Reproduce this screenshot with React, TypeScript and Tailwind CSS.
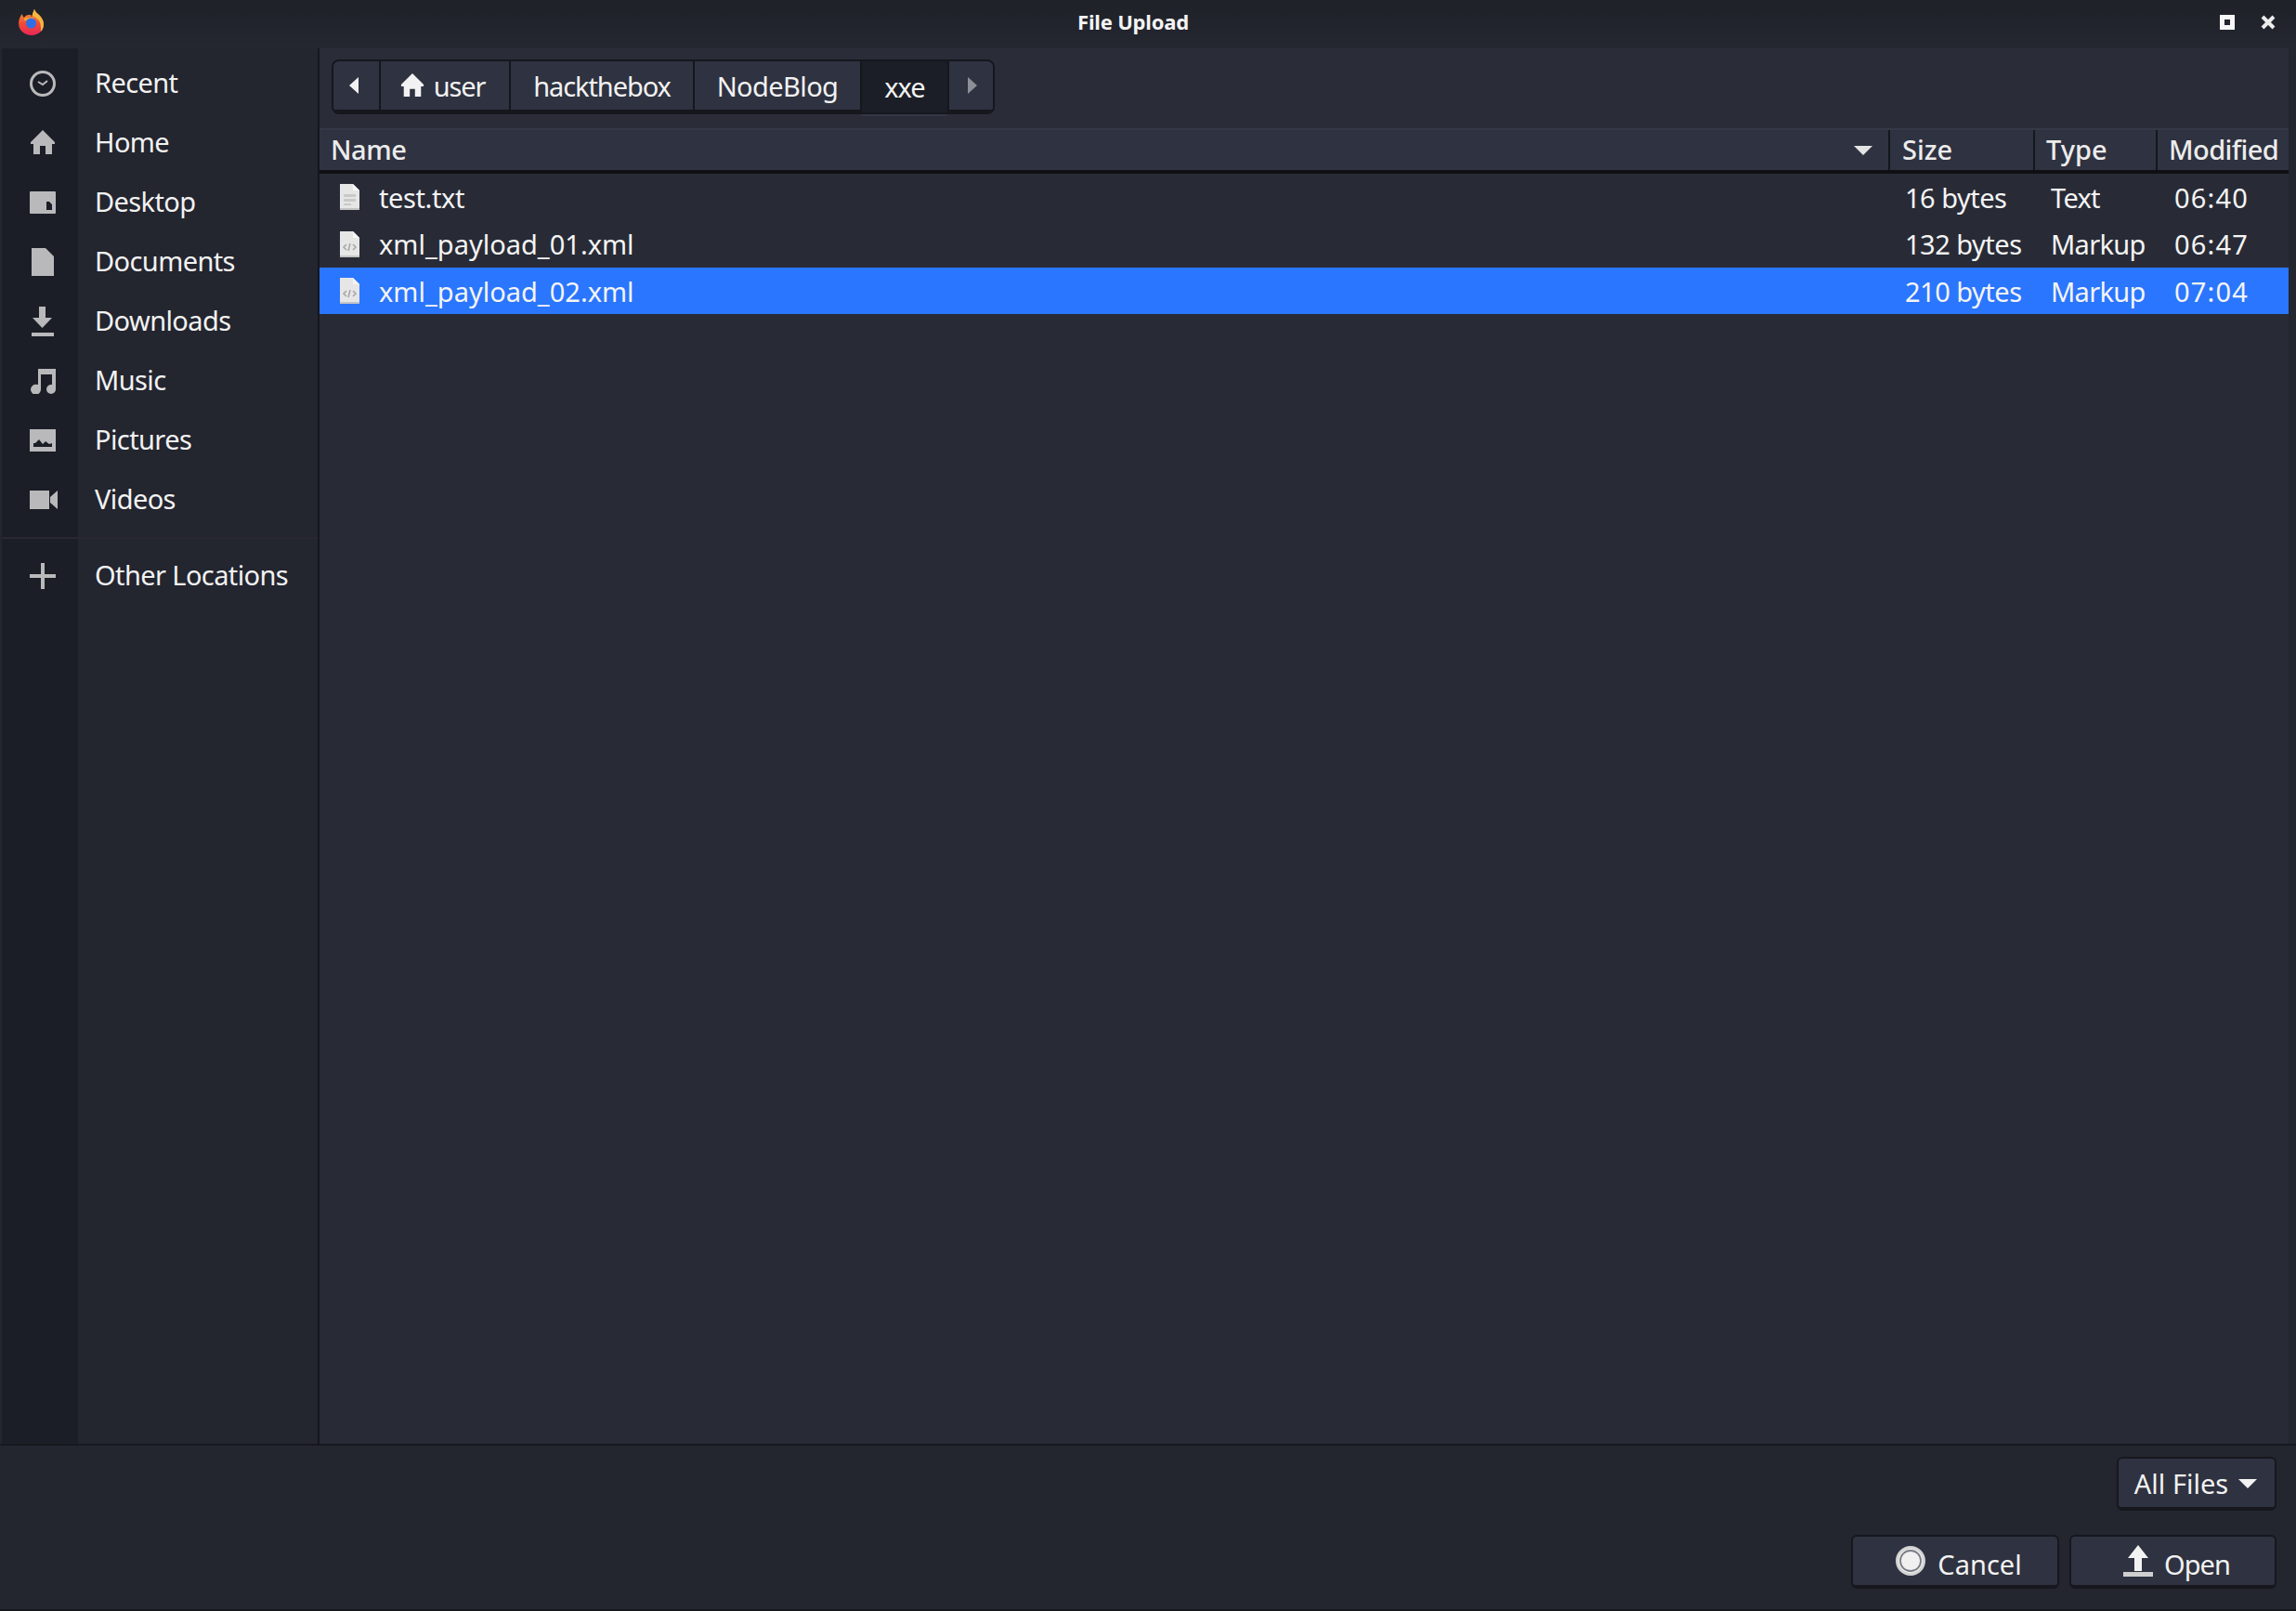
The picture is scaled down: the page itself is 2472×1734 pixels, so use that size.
const font = "font-['Noto_Sans',sans-serif]";

function Firefox() {
  return (
    <svg viewBox="0 0 28 28" className="w-[28px] h-[28px]">
      <defs>
        <linearGradient id="fx" x1="0.5" y1="0" x2="0.5" y2="1">
          <stop offset="0" stopColor="#f7a63a" />
          <stop offset="0.55" stopColor="#ef4b36" />
          <stop offset="1" stopColor="#e8265a" />
        </linearGradient>
      </defs>
      <path d="M17 0c1 3 3 4 5 6 3 3 5 6 5 10 0 7-6 12-13 12S0 23 0 15C0 11 2 7 4 5c0 2 1 3 2 4 1-2 3-3 5-3 1 0 3 0 3 1-1 0-1 1 0 1 1-3 2-5 3-8z" fill="url(#fx)" />
      <path d="M17 0c1 3 3 4 5 6 3 3 5 6 5 10 0 3-1 6-3 8 0-5 0-10-3-13-2-2-4-3-6-4 0-3 1-5 2-7z" fill="#f4b73e" />
      <path d="M6 9h10v3H6z" fill="#f5a12f" />
      <circle cx="13.5" cy="15" r="5.5" fill="#2e6ee6" />
    </svg>
  );
}

const G = "#b9b9bb";

const icons: Record<string, React.ReactNode> = {
  Recent: (
    <svg viewBox="0 0 28 28" className="w-[28px] h-[28px]">
      <circle cx="14" cy="14" r="12.5" fill="none" stroke={G} strokeWidth="3" />
      <path d="M9 12l5 3 5-4" fill="none" stroke={G} strokeWidth="2" />
    </svg>
  ),
  Home: (
    <svg viewBox="0 0 28 28" className="w-[28px] h-[28px]">
      <path d="M14 0L27 13v2h-3v11h-7v-9h-6v9H4V15H1v-2z" fill={G} />
    </svg>
  ),
  Desktop: (
    <svg viewBox="0 0 28 24" className="w-[28px] h-[24px]">
      <path fillRule="evenodd" d="M1 0h26a1 1 0 0 1 1 1v22a1 1 0 0 1-1 1H1a1 1 0 0 1-1-1V1a1 1 0 0 1 1-1z M18 11v9h6v-6l-3-3z" fill={G} />
    </svg>
  ),
  Documents: (
    <svg viewBox="0 0 28 30" className="w-[28px] h-[30px]">
      <path d="M2 0h15l9 9v21H2z" fill={G} />
    </svg>
  ),
  Downloads: (
    <svg viewBox="0 0 28 32" className="w-[28px] h-[32px]">
      <path d="M10 0h7v12h7L13.500 23 3 12h7z M2 28h24v4H2z" fill={G} />
    </svg>
  ),
  Music: (
    <svg viewBox="0 0 28 28" className="w-[28px] h-[28px]">
      <path d="M9 1h19v22a5 5 0 1 1-5-5l1 0V7H12v16a5.500 5.500 0 1 1-5-5.200l2 .2z" fill={G} />
    </svg>
  ),
  Pictures: (
    <svg viewBox="0 0 28 24" className="w-[28px] h-[24px]">
      <path fillRule="evenodd" d="M0 0h28v24H0z M4 19h20v-4l-3 1-4-3-3 3-4-5-4 4-2 0z" fill={G} />
    </svg>
  ),
  Videos: (
    <svg viewBox="0 0 30 20" className="w-[30px] h-[20px]">
      <path d="M0 0h21v20H0z M22 7l8-7v20l-8-7z" fill={G} />
    </svg>
  ),
  "Other Locations": (
    <svg viewBox="0 0 28 28" className="w-[28px] h-[28px]">
      <path d="M12 0h4v12h12v4H16v12h-4V16H0v-4h12z" fill={G} />
    </svg>
  ),
};

function Row({ name }: { name: string }) {
  return (
    <div className="flex h-[64px] items-center">
      <div className="w-[82px] h-full flex items-center pl-[30px] bg-[#1b1e26]">{icons[name]}</div>
      <span className="ml-[18px] mb-[3px] text-[29px] leading-none tracking-[-0.6px] text-[#f2f2f2]">{name}</span>
    </div>
  );
}

function FileIcon({ kind, selected }: { kind: "txt" | "xml"; selected?: boolean }) {
  return (
    <svg viewBox="0 0 22 28" className="w-[22px] h-[28px] shrink-0">
      <path d="M1 0h14l7 7v21H1z" fill="#e6e6e6" />
      <path d="M15 0l7 7h-7z" fill={selected ? "#f4f4f4" : "#f8f8f8"} />
      <path d="M1 26h21v2H1z" fill="#c4c4c4" />
      {kind === "txt" ? (
        <path d="M5 11h13v3H5zM5 16h13v3H5zM5 21h8v2H5z" fill="#c9c9c9" />
      ) : (
        <path d="M8 14l-3 3 3 3M15 14l3 3-3 3M12 13l-2 8" fill="none" stroke="#a8a8a8" strokeWidth="1.600" />
      )}
    </svg>
  );
}

function FileRow({ name, size, type, time, kind, selected, h }: { name: string; size: string; type: string; time: string; kind: "txt" | "xml"; selected?: boolean; h: string }) {
  return (
    <div className={`flex items-center text-[29px] leading-none text-[#f4f4f4] ${h} ${selected ? "bg-[#2a76fe]" : ""}`}>
      <div className="w-[1691px] pl-[21px] flex items-center gap-[21px]">
        <FileIcon kind={kind} selected={selected} />
        <span className={name === "test.txt" ? "tracking-[-0.4px]" : ""}>{name}</span>
      </div>
      <div className="w-[156px] pl-[16px] tracking-[-0.5px]">{size}</div>
      <div className="w-[132px] pl-[17px] tracking-[-0.7px]">{type}</div>
      <div className="pl-[18px] tracking-[1.2px]">{time}</div>
    </div>
  );
}

function Crumb({ children, w, active, last }: { children: React.ReactNode; w: string; active?: boolean; last?: boolean }) {
  return (
    <div className={`flex items-center justify-center h-full text-[29px] leading-none ${w} ${active ? "bg-[#1b1e26]" : "bg-[#2f3240] border-b-[3px] border-[#15171d]"} ${last ? "" : "border-r-[2px] border-r-[#15171d]"}`}>
      {children}
    </div>
  );
}

function Btn({ children, w }: { children: React.ReactNode; w: string }) {
  return (
    <div className={`h-[58px] ${w} rounded-[6px] border-[2px] border-[#16181e] border-b-[4px] bg-[#2f3240] flex items-center justify-center text-[29px] leading-none text-[#f2f2f2]`}>
      {children}
    </div>
  );
}

export default function App() {
  return (
    <div className={`w-[2472px] h-[1734px] flex flex-col bg-[#23252f] overflow-hidden text-[#f2f2f2] ${font}`}>
      <header className="h-[52px] shrink-0 relative flex items-center justify-center bg-gradient-to-b from-[#1f2128] to-[#252731]">
        <div className="absolute left-[20px] top-[10px]"><Firefox /></div>
        <span className="text-[22px] font-bold tracking-[-0.2px] leading-none text-[#f4f4f4] ml-[-32px] mt-[-6px]">File Upload</span>
        <div className="absolute left-[2390px] top-[16px] w-[16px] h-[16px] border-[5px] border-[#f7f7f7]" />
        <svg viewBox="0 0 16 16" className="absolute left-[2434px] top-[16px] w-[16px] h-[16px]">
          <path d="M2 2l12 12M14 2L2 14" stroke="#ececec" strokeWidth="4" />
        </svg>
      </header>

      <div className="h-[1504px] shrink-0 flex pl-[2px] border-b-[2px] border-[#16181e]">
        <aside className="w-[342px] shrink-0 flex flex-col border-r-[2px] border-[#15171d] bg-[#23252f]">
          <div className="h-[6px] flex"><div className="w-[82px] bg-[#1b1e26]" /></div>
          {["Recent", "Home", "Desktop", "Documents", "Downloads", "Music", "Pictures", "Videos"].map((n) => (
            <Row key={n} name={n} />
          ))}
          <div className="h-[8px] flex"><div className="w-[82px] bg-[#1b1e26]" /></div>
          <div className="h-[2px] bg-[#2a2730]" />
          <div className="h-[8px] flex"><div className="w-[82px] bg-[#1b1e26]" /></div>
          <Row name="Other Locations" />
          <div className="flex-1 flex"><div className="w-[82px] bg-[#1b1e26]" /></div>
        </aside>

        <main className="w-[2120px] shrink-0 flex flex-col bg-[#282b36]">
          <div className="h-[86px] shrink-0 pl-[13px] pt-[12px] bg-[#2a2d38]">
            <div className="relative w-[714px]">
              <div className="w-[714px] h-[59px] rounded-[8px] border-[2px] border-[#15171d] overflow-hidden flex">
                <Crumb w="w-[51px]">
                  <svg viewBox="0 0 10 18" className="w-[10px] h-[18px] mr-[5px]"><path d="M10 0v18L0 9z" fill="#f2f2f2" /></svg>
                </Crumb>
                <Crumb w="w-[140px]">
                  <span className="flex items-center gap-[10px] tracking-[-1.2px] mr-[5px]">
                    <svg viewBox="0 0 28 28" className="w-[26px] h-[26px]"><path d="M14 0L27 13v2h-3v12h-7v-9h-6v9H4V15H1v-2z" fill="#f2f2f2" /></svg>
                    user
                  </span>
                </Crumb>
                <Crumb w="w-[198px]"><span className="tracking-[-1.1px]">hackthebox</span></Crumb>
                <Crumb w="w-[180px]"><span className="tracking-[-0.6px]">NodeBlog</span></Crumb>
                <Crumb w="w-[94px]" active><span className="tracking-[-1px] mb-[1px]">xxe</span></Crumb>
                <Crumb w="w-[47px]" last>
                  <svg viewBox="0 0 10 18" className="w-[10px] h-[18px] ml-[2px]"><path d="M0 0v18L10 9z" fill="#8d8f96" /></svg>
                </Crumb>
              </div>
              <div className="absolute left-[570px] top-[59px] w-[93px] h-[2px] bg-[#343744]" />
            </div>
          </div>

          <div className="h-[49px] shrink-0 flex bg-[#2f3240] border-t-[2px] border-[#353846] border-b-[4px] border-b-[#0f1014] text-[29px] font-medium leading-none text-[#ececec]">
            <div className="w-[1691px] pl-[12px] pb-[3px] flex items-center justify-between pr-[17px] border-r-[2px] border-[#15171d]">
              <span className="tracking-[-0.4px]">Name</span>
              <svg viewBox="0 0 20 10" className="w-[20px] h-[10px] mt-[3px]"><path d="M0 0h20L10 10z" fill="#e4e4e4" /></svg>
            </div>
            <div className="w-[156px] pl-[13px] pb-[3px] flex items-center border-r-[2px] border-[#15171d]">Size</div>
            <div className="w-[132px] pl-[12px] pb-[3px] flex items-center border-r-[2px] border-[#15171d]">Type</div>
            <div className="flex-1 pl-[12px] pb-[3px] flex items-center tracking-[-0.6px]">Modified</div>
          </div>

          <FileRow h="h-[50px]" name="test.txt" size="16 bytes" type="Text" time="06:40" kind="txt" />
          <FileRow h="h-[51px]" name="xml_payload_01.xml" size="132 bytes" type="Markup" time="06:47" kind="xml" />
          <FileRow h="h-[50px]" selected name="xml_payload_02.xml" size="210 bytes" type="Markup" time="07:04" kind="xml" />
        </main>
      </div>

      <footer className="flex-1 flex flex-col items-end pr-[21px] pt-[12px] gap-[26px] border-b-[2px] border-[#16181e]">
        <Btn w="w-[172px]">
          <span className="flex items-center gap-[11px] ml-[-2px]">
            All Files
            <svg viewBox="0 0 20 10" className="w-[20px] h-[10px] mt-[2px]"><path d="M0 0h20L10 10z" fill="#f2f2f2" /></svg>
          </span>
        </Btn>
        <div className="flex gap-[11px]">
          <Btn w="w-[224px]">
            <span className="flex items-center gap-[13px] ml-[8px]">
              <svg viewBox="0 0 32 32" className="w-[32px] h-[32px] mt-[-1px]">
                <circle cx="16" cy="16" r="14.500" fill="#f0f0f0" stroke="#d4d4d4" strokeWidth="3" />
                <circle cx="16" cy="16" r="11" fill="none" stroke="#7a7c85" strokeWidth="1.800" />
              </svg>
              <span className="mt-[6px]">Cancel</span>
            </span>
          </Btn>
          <Btn w="w-[223px]">
            <span className="flex items-center gap-[12px] ml-[8px]">
              <svg viewBox="0 0 32 34" className="w-[32px] h-[34px]">
                <path d="M16 0l11 14h-7v14h-8V14H5z" fill="#f2f2f2" />
                <path d="M0 29h32v5H0z" fill="#cfcfcf" />
              </svg>
              <span className="mt-[6px] tracking-[-1px]">Open</span>
            </span>
          </Btn>
        </div>
      </footer>
    </div>
  );
}
